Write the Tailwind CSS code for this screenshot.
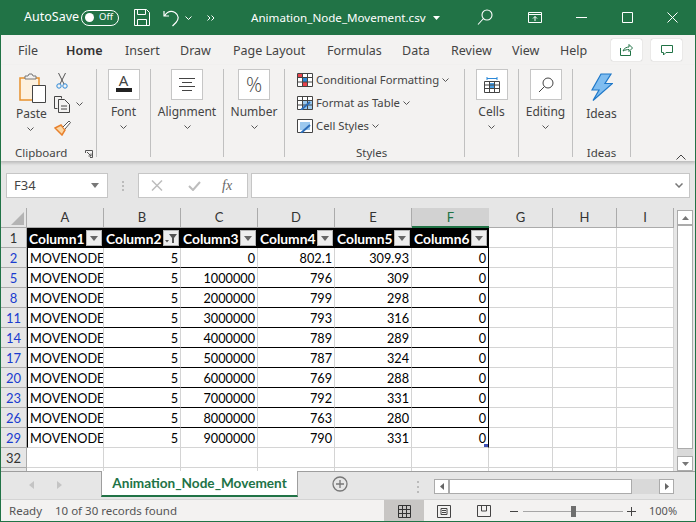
<!DOCTYPE html>
<html lang="en">
<head>
  <meta charset="UTF-8">
  <title>Animation_Node_Movement.csv</title>
  <script src="https://cdn.jsdelivr.net/npm/@tailwindcss/browser@4"></script>
</head>
<body class="bg-white">
  <div class="w-[696px] h-[522px] overflow-hidden flex flex-col font-['Noto_Sans',sans-serif] text-[#444] border-x border-b border-[#217346]">

    <!-- title bar -->
    <div class="h-[35px] -mx-px shrink-0 bg-[#217346] text-white flex items-center text-[12.5px]">
      <span class="ml-[24px] w-[57px]">AutoSave</span>
      <span class="w-[38px] h-[16px] rounded-full border border-white flex items-center justify-between pl-[3px] pr-[5px] text-[9.500px]"><i class="w-[9px] h-[9px] rounded-full bg-white"></i>Off</span>
      <svg class="ml-[15px]" width="16" height="17" viewBox="0 0 16 17" fill="none" stroke="white"><path d="M.5.5h12l3 3v13H.5zM3.500.5v5h8v-5M3.500 16.500v-6h9v6"/></svg>
      <svg class="ml-[13px]" width="18" height="18" viewBox="0 0 18 18" fill="none" stroke="white" stroke-width="1.200"><path d="M1 2v5h5M1.500 7C4 3 8 1.500 12 3.500c4 2.500 4 7 1 10l-3.500 3.500"/></svg>
      <svg class="ml-[4px]" width="7" height="4" viewBox="0 0 7 4" fill="none" stroke="white"><path d="M.5.500l3 3 3-3"/></svg>
      <svg class="ml-[15px]" width="8" height="6" viewBox="0 0 8 6" fill="none" stroke="white"><path d="M.5.500l2.500 2.500-2.500 2.500M4.500.500l2.500 2.500-2.500 2.500"/></svg>
      <span class="ml-[36px] w-[177px] whitespace-nowrap text-[11.600px]">Animation_Node_Movement.csv</span>
      <svg class="ml-[5px]" width="7" height="4" viewBox="0 0 7 4" fill="white"><path d="M0 0h7L3.500 4z"/></svg>
      <svg class="ml-[37px]" width="16" height="17" viewBox="0 0 16 17" fill="none" stroke="white" stroke-width="1.100"><circle cx="10" cy="6" r="5"/><path d="M6.500 9.500L1 15.500"/></svg>
      <svg class="ml-[35px]" width="14" height="11" viewBox="0 0 14 11" fill="none" stroke="white"><path d="M.5.500h13v10H.5zM.5 2.500h13M7 9V4.500M5 6.500l2-2 2 2"/></svg>
      <svg class="ml-[34px]" width="11" height="1" viewBox="0 0 11 1"><path d="M0 .5h11" stroke="white"/></svg>
      <svg class="ml-[35px]" width="11" height="11" viewBox="0 0 11 11" fill="none" stroke="white"><path d="M.5.500h10v10H.5z"/></svg>
      <svg class="ml-[34px]" width="11" height="11" viewBox="0 0 11 11" fill="none" stroke="white"><path d="M.5.500l10 10M10.500.500l-10 10"/></svg>
    </div>

    <!-- tabs -->
    <div class="h-[30px] shrink-0 bg-[#f3f2f1] flex items-start text-[12.500px] pl-[17px]">
      <span class="w-[48px] pt-[7px]">File</span>
      <span class="w-[59px] pt-[7px]"><span class="inline-block font-semibold text-[#333] border-b-[2px] border-[#217346] h-[26px]">Home</span></span>
      <span class="w-[55px] pt-[7px]">Insert</span>
      <span class="w-[53px] pt-[7px]">Draw</span>
      <span class="w-[94px] pt-[7px]">Page Layout</span>
      <span class="w-[75px] pt-[7px]">Formulas</span>
      <span class="w-[49px] pt-[7px]">Data</span>
      <span class="w-[61px] pt-[7px]">Review</span>
      <span class="w-[48px] pt-[7px]">View</span>
      <span class="w-[51px] pt-[7px] whitespace-nowrap">Help</span>
      <span class="w-[31px] h-[22px] mt-[4px] bg-white rounded-[2px] shadow-[0_0_1px_#999] flex items-center justify-center">
        <svg width="13" height="12" viewBox="0 0 13 12" fill="none" stroke="#217346"><path d="M.5 4v7.500h10V7M3 7c1-3 4-4 6-4V.5l3.500 3.500L9 7.500V5.500C7 5.500 5 6 3 7z"/></svg>
      </span>
      <span class="w-[31px] h-[22px] mt-[4px] ml-[9px] bg-white rounded-[2px] shadow-[0_0_1px_#999] flex items-center justify-center">
        <svg width="12" height="11" viewBox="0 0 12 11" fill="none" stroke="#217346"><path d="M.5.500h11v7H5L2.500 10V7.500h-2z"/></svg>
      </span>
    </div>

    <!-- ribbon -->
    <div class="h-[96px] shrink-0 bg-[#f3f2f1] shadow-[0_2px_3px_#0003] relative flex text-[12px] leading-[16px] pt-[4px] -ml-px">

      <!-- clipboard -->
      <div class="w-[97px] h-[88px] border-r border-[#c0c0c0] relative">
        <svg class="absolute left-[19px] top-[4px]" width="28" height="30" viewBox="0 0 28 30" fill="none"><path d="M1 5h19v22H1z" fill="#fdf1de" stroke="#e8912d" stroke-width="1.500"/><path d="M6 5V3h3l1-2h3l1 2h3v3H6z" fill="#f3f2f1" stroke="#777"/><path d="M13.500 12.500h13v17h-13z" fill="white" stroke="#444"/></svg>
        <span class="absolute left-[16px] top-[37px] w-[30px] text-center">Paste</span>
        <svg class="absolute left-[27px] top-[58px]" width="7" height="4" viewBox="0 0 7 4" fill="none" stroke="#555"><path d="M.5.500l3 3 3-3"/></svg>
        <svg class="absolute left-[56px] top-[3px]" width="12" height="17" viewBox="0 0 12 17" fill="none"><path d="M2.500 1l5.500 11M9.500 1L4 12" stroke="#555"/><circle cx="3" cy="14" r="2.200" stroke="#2b88d8"/><circle cx="9" cy="14" r="2.200" stroke="#2b88d8"/></svg>
        <svg class="absolute left-[54px] top-[27px]" width="16" height="17" viewBox="0 0 16 17" fill="none" stroke="#444"><path d="M.5.500h7v2M.5.500v12h3"/><path d="M4.500 3.500h6l5 5v8h-11z" fill="#f3f2f1"/><path d="M7 10h6M7 13h6"/></svg>
        <svg class="absolute left-[76px] top-[33px]" width="7" height="4" viewBox="0 0 7 4" fill="none" stroke="#555"><path d="M.5.500l3 3 3-3"/></svg>
        <svg class="absolute left-[54px] top-[51px]" width="17" height="16" viewBox="0 0 17 16" fill="none"><path d="M1 8l6-3 4 5-3 5z" fill="#fbd7a5" stroke="#e8812d" stroke-width="1.500"/><path d="M9 7l6-6 1.500 1.500L11 9" fill="#fff" stroke="#555"/></svg>
        <span class="absolute left-[15px] top-[76px] text-[11.500px]">Clipboard</span>
        <svg class="absolute left-[85px] top-[81px]" width="8" height="8" viewBox="0 0 8 8" fill="none" stroke="#555"><path d="M.5 3V.5h7v7H5M2 2l4 4M6 3.500V6H3.500"/></svg>
      </div>

      <!-- font, alignment, number -->
      <div class="w-[54px] h-[88px] border-r border-[#c0c0c0] flex flex-col items-center">
        <div class="w-[32px] h-[31px] bg-white border border-[#c6c6c6] flex flex-col items-center pt-[3px]">
          <span class="text-[15px] leading-[15px]">A</span><i class="w-[16px] h-[4px] bg-[#222]"></i>
        </div>
        <span class="mt-[4px]">Font</span>
        <svg class="mt-[5px]" width="7" height="4" viewBox="0 0 7 4" fill="none" stroke="#555"><path d="M.5.500l3 3 3-3"/></svg>
      </div>
      <div class="w-[73px] h-[88px] border-r border-[#c0c0c0] flex flex-col items-center">
        <div class="w-[32px] h-[31px] bg-white border border-[#c6c6c6] flex items-center justify-center">
          <svg width="16" height="14" viewBox="0 0 16 14" stroke="#444"><path d="M0 .5h16M3 4.500h10M0 8.500h16M3 12.500h10"/></svg>
        </div>
        <span class="mt-[4px]">Alignment</span>
        <svg class="mt-[5px]" width="7" height="4" viewBox="0 0 7 4" fill="none" stroke="#555"><path d="M.5.500l3 3 3-3"/></svg>
      </div>
      <div class="w-[61px] h-[88px] border-r border-[#c0c0c0] flex flex-col items-center">
        <div class="w-[32px] h-[31px] bg-white border border-[#c6c6c6] flex items-center justify-center text-[20px] font-light font-['Open_Sans',sans-serif]">%</div>
        <span class="mt-[4px]">Number</span>
        <svg class="mt-[5px]" width="7" height="4" viewBox="0 0 7 4" fill="none" stroke="#555"><path d="M.5.500l3 3 3-3"/></svg>
      </div>

      <!-- styles -->
      <div class="w-[180px] h-[88px] border-r border-[#c0c0c0] flex flex-col pl-[12px] relative text-[11.300px]">
        <div class="h-[23px] -mt-px flex items-center gap-[3px]">
          <svg width="16" height="14" viewBox="0 0 16 14" fill="none"><path d="M.5.500h15v13H.5z" fill="#fff" stroke="#444"/><path d="M1 1h4v4H1zM6 9h4v4H6z" fill="#e8434d"/><path d="M6 5h4v4H6z" fill="#2b88d8"/><path d="M5.500 0v14M10.500 0v14M0 4.500h16M0 9h16" stroke="#444"/></svg>
          <span class="whitespace-nowrap">Conditional Formatting</span>
          <svg width="7" height="4" viewBox="0 0 7 4" fill="none" stroke="#555"><path d="M.5.500l3 3 3-3"/></svg>
        </div>
        <div class="h-[23px] flex items-center gap-[3px]">
          <svg width="16" height="14" viewBox="0 0 16 14" fill="none"><path d="M.5.500h15v13H.5z" fill="#fff" stroke="#444"/><path d="M6 5h9v8H6z" fill="#9cc9ef"/><path d="M5.500 0v14M10.500 0v14M0 4.500h16M0 9h16" stroke="#444"/><path d="M4 14l9-8" stroke="#2b6cb8" stroke-width="2"/></svg>
          <span class="whitespace-nowrap">Format as Table</span>
          <svg width="7" height="4" viewBox="0 0 7 4" fill="none" stroke="#555"><path d="M.5.500l3 3 3-3"/></svg>
        </div>
        <div class="h-[23px] flex items-center gap-[3px]">
          <svg width="16" height="14" viewBox="0 0 16 14" fill="none"><path d="M.5.500h15v13H.5z" fill="#fff" stroke="#444"/><path d="M3 3h10v8H3z" fill="#9cc9ef"/><path d="M4 14l9-8" stroke="#2b6cb8" stroke-width="2"/></svg>
          <span class="whitespace-nowrap">Cell Styles</span>
          <svg width="7" height="4" viewBox="0 0 7 4" fill="none" stroke="#555"><path d="M.5.500l3 3 3-3"/></svg>
        </div>
        <span class="absolute left-[71px] top-[76px] text-[11.500px]">Styles</span>
      </div>

      <!-- cells, editing -->
      <div class="w-[54px] h-[88px] border-r border-[#c0c0c0] flex flex-col items-center">
        <div class="w-[32px] h-[31px] bg-white border border-[#c6c6c6] flex items-center justify-center">
          <svg width="16" height="16" viewBox="0 0 16 16" fill="none"><path d="M5.500 6h5v5h-5z" fill="#4aa0e6"/><path d="M.5 4.500h15v11H.5zM.5 8h15M.5 11.500h15M5.500 4.500v11M10.500 4.500v11" stroke="#444"/><path d="M3 1.500h10M3 0v3M13 0v3" stroke="#2b88d8"/></svg>
        </div>
        <span class="mt-[4px]">Cells</span>
        <svg class="mt-[5px]" width="7" height="4" viewBox="0 0 7 4" fill="none" stroke="#555"><path d="M.5.500l3 3 3-3"/></svg>
      </div>
      <div class="w-[54px] h-[88px] border-r border-[#c0c0c0] flex flex-col items-center">
        <div class="w-[32px] h-[31px] bg-white border border-[#c6c6c6] flex items-center justify-center">
          <svg width="16" height="16" viewBox="0 0 16 16" fill="none" stroke="#444"><circle cx="10" cy="6" r="5"/><path d="M6.500 9.500L1 15"/></svg>
        </div>
        <span class="mt-[4px]">Editing</span>
        <svg class="mt-[5px]" width="7" height="4" viewBox="0 0 7 4" fill="none" stroke="#555"><path d="M.5.500l3 3 3-3"/></svg>
      </div>

      <!-- ideas -->
      <div class="w-[58px] h-[88px] border-r border-[#c0c0c0] flex flex-col items-center">
        <svg class="mt-[4px] shrink-0" width="22" height="29" viewBox="0 0 22 29" fill="#7fbdf0" stroke="#1f78c8" stroke-width="1.200"><path d="M10 1h10l-6 9.500h7.500L2 27.500 8 17H1z"/></svg>
        <span class="mt-[4px] shrink-0">Ideas</span>
        <span class="mt-[23px] shrink-0 text-[11.500px]">Ideas</span>
      </div>
      <svg class="absolute left-[676px] top-[89px]" width="10" height="6" viewBox="0 0 10 6" fill="none" stroke="#444"><path d="M.5 5.500L5 1l4.500 4.500"/></svg>
    </div>

    <!-- formula bar -->
    <div class="h-[47px] shrink-0 bg-[#e6e6e6] flex items-start pt-[12px] pl-[5px] pr-[5px] text-[13px]">
      <div class="w-[102px] h-[25px] bg-white border border-[#c6c6c6] flex items-center justify-between pl-[7px] pr-[8px] text-[#444]">
        F34
        <svg width="8" height="5" viewBox="0 0 8 5" fill="#777"><path d="M0 0h8L4 5z"/></svg>
      </div>
      <div class="w-[30px] h-[25px] flex flex-col items-center justify-center gap-[2px]">
        <i class="w-[2px] h-[2px] bg-[#bbb]"></i><i class="w-[2px] h-[2px] bg-[#bbb]"></i><i class="w-[2px] h-[2px] bg-[#bbb]"></i>
      </div>
      <div class="w-[110px] h-[25px] bg-white border border-[#c6c6c6] flex items-center pl-[12px]">
        <svg width="12" height="11" viewBox="0 0 12 11" fill="none" stroke="#bdbdbd" stroke-width="1.500"><path d="M1 .500l10 10M11 .500l-10 10"/></svg>
        <svg class="ml-[25px]" width="13" height="10" viewBox="0 0 13 10" fill="none" stroke="#bdbdbd" stroke-width="2"><path d="M1 5l4 4 7-8"/></svg>
        <span class="ml-[21px] text-[14px] italic font-['Liberation_Serif',serif] text-[#666]">fx</span>
      </div>
      <div class="ml-[3px] flex-1 h-[25px] bg-white border border-[#c6c6c6] flex items-center justify-end pr-[6px]">
        <svg width="8" height="5" viewBox="0 0 8 5" fill="none" stroke="#777" stroke-width="1.500"><path d="M.5.500L4 4 7.500.500"/></svg>
      </div>
    </div>

    <!-- sheet -->
    <div class="h-[263px] shrink-0 bg-[#e6e6e6] flex overflow-hidden">
      <div class="w-[673px] shrink-0 overflow-hidden font-['Lato',sans-serif] text-[12.700px] text-black" id="sheet"></div>
      <div class="ml-[3px] w-[16px] flex flex-col pt-[2px]">
        <div class="h-[15px] bg-white border border-[#ababab] flex items-center justify-center"><svg width="7" height="4" viewBox="0 0 7 4" fill="#777"><path d="M0 4h7L3.500 0z"/></svg></div>
        <div class="h-[224px] bg-white border border-[#ababab]"></div>
        <div class="flex-1 bg-[#d9d9d9]"></div>
        <div class="h-[15px] bg-white border border-[#ababab] flex items-center justify-center"><svg width="7" height="4" viewBox="0 0 7 4" fill="#777"><path d="M0 0h7L3.500 4z"/></svg></div>
      </div>
    </div>

    <!-- sheet tabs -->
    <div class="h-[28px] shrink-0 bg-[#e6e6e6] border-t border-[#9e9e9e] flex items-start">
      <svg class="ml-[28px] mt-[9px]" width="5" height="8" viewBox="0 0 5 8" fill="#c4c4c4"><path d="M5 0v8L0 4z"/></svg>
      <svg class="ml-[23px] mt-[9px]" width="5" height="8" viewBox="0 0 5 8" fill="#c4c4c4"><path d="M0 0v8l5-4z"/></svg>
      <div class="ml-[39px] -mt-px w-[197px] h-[26px] pt-px bg-white border-x border-[#9e9e9e] border-b-[2px] border-b-[#217346] flex items-center justify-center font-['Lato',sans-serif] font-bold text-[13.600px] text-[#217346]">Animation_Node_Movement</div>
      <svg class="ml-[34px] mt-[4px]" width="16" height="16" viewBox="0 0 16 16" fill="none" stroke="#777" stroke-width="1.300"><circle cx="8" cy="8" r="7"/><path d="M4 8h8M8 4v8"/></svg>
      <div class="ml-[69px] mt-[9px] w-[2px] flex flex-col gap-[3px]"><i class="h-[2px] bg-[#bbb]"></i><i class="h-[2px] bg-[#bbb]"></i><i class="h-[2px] bg-[#bbb]"></i></div>
      <div class="ml-[15px] mt-[7px] w-[240px] h-[15px] flex">
        <div class="w-[15px] bg-white border border-[#ababab] flex items-center justify-center"><svg width="4" height="7" viewBox="0 0 4 7" fill="#666"><path d="M4 0v7L0 3.500z"/></svg></div>
        <div class="w-[183px] bg-white border border-[#ababab]"></div>
        <div class="flex-1 bg-[#d9d9d9]"></div>
        <div class="w-[15px] bg-white border border-[#ababab] flex items-center justify-center"><svg width="4" height="7" viewBox="0 0 4 7" fill="#666"><path d="M0 0v7l4-3.500z"/></svg></div>
      </div>
    </div>

    <!-- status bar -->
    <div class="flex-1 bg-[#f3f2f1] border-t border-[#d4d4d4] flex items-center text-[11.500px] text-[#555]">
      <span class="ml-[8px] w-[46px]">Ready</span>
      <span class="w-[329px] whitespace-nowrap">10 of 30 records found</span>
      <div class="w-[40px] h-[22px] bg-[#c8c6c4] flex items-center justify-center">
        <svg width="13" height="13" viewBox="0 0 13 13" fill="none" stroke="#333"><path d="M.5.500h12v12H.5zM.5 4.500h12M.5 8.500h12M4.500.500v12M8.500.500v12"/></svg>
      </div>
      <div class="w-[40px] flex justify-center">
        <svg width="14" height="13" viewBox="0 0 14 13" fill="none" stroke="#444"><path d="M.5.500h13v12H.5zM4 3.500h6v6H4zM5 5.500h4M5 7.500h4"/></svg>
      </div>
      <div class="w-[40px] flex justify-center">
        <svg width="14" height="12" viewBox="0 0 14 12" fill="none" stroke="#444"><path d="M.5.500h13v11H.5zM4.500.500v5.500h5V.500"/></svg>
      </div>
      <svg class="ml-[6px]" width="8" height="1" viewBox="0 0 8 1"><path d="M0 .5h8" stroke="#444"/></svg>
      <div class="ml-[5px] w-[100px] h-[15px] relative flex items-center"><i class="w-full h-px bg-[#a6a6a6]"></i><i class="absolute left-[48px] w-[5px] h-[11px] bg-[#6e6e6e]"></i></div>
      <svg class="ml-[4px]" width="9" height="9" viewBox="0 0 9 9"><path d="M0 4.500h9M4.500 0v9" stroke="#444"/></svg>
      <span class="ml-[13px] text-[11px] whitespace-nowrap">100%</span>
    </div>
  </div>

  <script>
    // filtered rows of the table: [row, B, C, D, E, F]
    const rows = [
      [2, 5, 0, 802.1, 309.93, 0],
      [5, 5, 1000000, 796, 309, 0],
      [8, 5, 2000000, 799, 298, 0],
      [11, 5, 3000000, 793, 316, 0],
      [14, 5, 4000000, 789, 289, 0],
      [17, 5, 5000000, 787, 324, 0],
      [20, 5, 6000000, 769, 288, 0],
      [23, 5, 7000000, 792, 331, 0],
      [26, 5, 8000000, 763, 280, 0],
      [29, 5, 9000000, 790, 331, 0],
    ];
    const grid = 'grid grid-cols-[26px_77px_77px_77px_77px_77px_77px_64px_64px_57px] grid-rows-[20px]';
    const funnel = '<svg width="12" height="9" viewBox="0 0 12 9"><path d="M4 0h8L9 4v5H7V4z" fill="#555"/><path d="M0 6h4L2 8.500z" fill="#555"/></svg>';
    const arrow = '<svg width="8" height="5" viewBox="0 0 8 5" fill="#666"><path d="M0 0h8L4 5z"/></svg>';

    let html = '<div class="' + grid + ' text-[13px] text-[#333] text-center leading-[19px]">';
    html += '<div class="border-r border-b border-[#ababab] relative"><svg class="absolute right-[2px] bottom-[2px]" width="13" height="13" viewBox="0 0 13 13"><path d="M13 0v13H0z" fill="#b4b4b4"/></svg></div>';
    ['A', 'B', 'C', 'D', 'E'].forEach((c) => {
      html += '<div class="border-r border-b border-[#ababab]">' + c + '</div>';
    });
    html += '<div class="bg-[#d2d2d2] border-b-2 border-[#217346] text-[#217346]">F</div>';
    ['G', 'H', 'I'].forEach((c) => {
      html += '<div class="border-r border-b border-[#ababab]">' + c + '</div>';
    });
    html += '</div>';

    // header row
    html += '<div class="' + grid + '">';
    html += '<div class="border-r border-b border-[#ababab] text-center text-[13px] text-[#333] leading-[21px]">1</div>';
    ['Column1', 'Column2', 'Column3', 'Column4', 'Column5', 'Column6'].forEach((c, i) => {
      html += '<div class="bg-black text-white font-bold text-[13.800px] flex items-center justify-between pl-[2px] pr-[2px] overflow-hidden whitespace-nowrap"><span class="pt-[2px]">' + c +
        '</span><span class="w-[16px] h-[16px] shrink-0 bg-[#eeeeee] border border-[#b4b4b4] flex items-center justify-center">' + (i === 1 ? funnel : arrow) + '</span></div>';
    });
    ['', '', ''].forEach(() => {
      html += '<div class="bg-white border-r border-b border-[#d4d4d4]"></div>';
    });
    html += '</div>';

    rows.forEach((r, idx) => {
      const last = idx === rows.length - 1;
      const line = last ? 'border-b-[#d4d4d4]' : 'border-b-black';
      html += '<div class="' + grid + ' leading-[21px]">';
      html += '<div class="border-r border-b border-[#ababab] text-center text-[13px] text-[#1a3ccf]">' + r[0] + '</div>';
      html += '<div class="bg-white border-l border-l-black border-b pl-[2px] overflow-hidden whitespace-nowrap ' + line + ' border-r border-r-[#d4d4d4]">MOVENODE</div>';
      r.slice(1, 5).forEach((v) => {
        html += '<div class="bg-white text-right pr-[2px] border-b ' + line + ' border-r border-r-[#d4d4d4]">' + v + '</div>';
      });
      html += '<div class="bg-white text-right pr-[2px] border-b ' + line + ' border-r border-r-black relative">' + r[5] +
        (last ? '<i class="absolute right-0 bottom-0 w-[4px] h-[3px] bg-[#3f51b5]"></i>' : '') + '</div>';
      ['', '', ''].forEach(() => {
        html += '<div class="bg-white border-r border-b border-[#d4d4d4]"></div>';
      });
      html += '</div>';
    });

    // empty rows under the table
    ['32', ''].forEach((n) => {
      html += '<div class="' + grid + ' leading-[21px]">';
      html += '<div class="border-r border-b border-[#ababab] text-center text-[13px] text-[#333]">' + n + '</div>';
      for (let i = 0; i < 9; i++) html += '<div class="bg-white border-r border-b border-[#d4d4d4]"></div>';
      html += '</div>';
    });
    document.getElementById('sheet').innerHTML = html;
  </script>
</body>
</html>
